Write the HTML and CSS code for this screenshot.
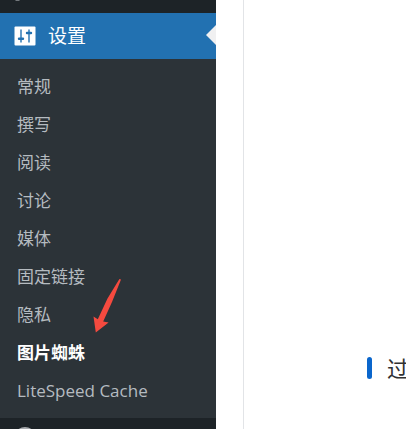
FILE: index.html
```html
<!DOCTYPE html>
<html lang="zh-CN">
<head>
  <meta charset="UTF-8">
  <meta name="viewport" content="width=device-width, initial-scale=1.0">
  <title>设置</title>
  <link rel="stylesheet" href="styles.css">
</head>
<body>

  <div class="admin">
    <nav class="sidebar">
      <div class="menu-prev">
        <svg width="24" height="2" viewBox="0 0 24 2"><path d="M3 0h5l-1 1H4z" fill="#73787c"/></svg>
      </div>

      <a href="#" class="menu-top">
        <svg class="menu-icon" width="22" height="20" viewBox="0 0 22 20">
          <rect x="0.5" y="0.5" width="21" height="19" rx="1" fill="#fff"/>
          <path d="M7 3.5v13M15 3.5v13" stroke="#2271b1" stroke-width="1.4"/>
          <path d="M5 12.8h4M13 7h4" stroke="#2271b1" stroke-width="2.4" stroke-linecap="round"/>
        </svg>
        <span>设置</span>
      </a>

      <ul class="submenu">
        <li><a href="#">常规</a></li>
        <li><a href="#">撰写</a></li>
        <li><a href="#">阅读</a></li>
        <li><a href="#">讨论</a></li>
        <li><a href="#">媒体</a></li>
        <li><a href="#">固定链接</a></li>
        <li><a href="#">隐私</a></li>
        <li class="current">
          <a href="#">图片蜘蛛</a>
          <svg class="pointer" width="30" height="56" viewBox="0 0 30 56">
            <path d="M26.4 1L28 1.4L19 24L10.2 43.5L15.6 44.4L2.8 54.5L0.5 38.5L4.8 41.3L14.5 20.5Z" fill="#f54a3f"/>
          </svg>
        </li>
        <li><a href="#">LiteSpeed Cache</a></li>
      </ul>

      <div class="menu-next">
        <svg width="22" height="22" viewBox="0 0 22 22"><circle cx="11" cy="11" r="11" fill="#a7aaad"/></svg>
      </div>
    </nav>

    <main class="content">
      <div class="panel">
        <h2 class="section-title">过</h2>
      </div>
    </main>
  </div>

</body>
</html>
```
FILE: styles.css
```css
* {
  box-sizing: border-box;
}

body {
  margin: 0;
  font-family: "Open Sans", "Noto Sans CJK SC", sans-serif;
  background-color: #fff;
}

.admin {
  display: flex;
  height: 100vh;
  overflow: hidden;
}

.sidebar {
  flex: 0 0 216px;
  background-color: #1d2327;
}

.sidebar svg {
  display: block;
}

.menu-prev {
  height: 13px;
  padding-left: 12px;
}

.menu-top {
  position: relative;
  display: flex;
  align-items: center;
  gap: 12px;
  height: 46px;
  padding-left: 14px;
  background-color: #2271b1;
  color: #fff;
  font-size: 19px;
  line-height: 26px;
  text-decoration: none;
}

/* notch that points at the open section */
.menu-top::after {
  content: "";
  position: absolute;
  top: 12px;
  right: 0;
  border: 10px solid transparent;
  border-left-width: 0;
  border-right-color: #f0f0f1;
}

.submenu {
  margin: 0;
  padding: 9px 0 8px;
  list-style: none;
  background-color: #2c3338;
}

.submenu li {
  position: relative;
}

.submenu a {
  display: block;
  padding-left: 17px;
  color: #b5bbc0;
  font-size: 17px;
  line-height: 38px;
  text-decoration: none;
}

.submenu a:hover {
  color: #72aee6;
}

.submenu .current a {
  color: #fff;
  font-weight: bold;
}

.pointer {
  position: absolute;
  left: 93px;
  bottom: 38px;
  pointer-events: none;
}

/* the arrow ends just above the current item's text */
.current .pointer {
  top: -56px;
  bottom: auto;
}

.menu-next {
  padding: 9px 0 0 14px;
}

.content {
  flex: 1;
  min-width: 0;
  padding-left: 27px;
}

.panel {
  height: 100%;
  padding: 348px 0 0 123px;
  border-left: 1px solid #e2e4e7;
  overflow: hidden;
}

.section-title {
  display: flex;
  align-items: center;
  gap: 15px;
  margin: 0;
  color: #303133;
  font-size: 22px;
  font-weight: normal;
  line-height: 40px;
  white-space: nowrap;
}

.section-title::before {
  content: "";
  flex: none;
  width: 5px;
  height: 22px;
  border-radius: 3px;
  background-color: #0a66cc;
}
```
